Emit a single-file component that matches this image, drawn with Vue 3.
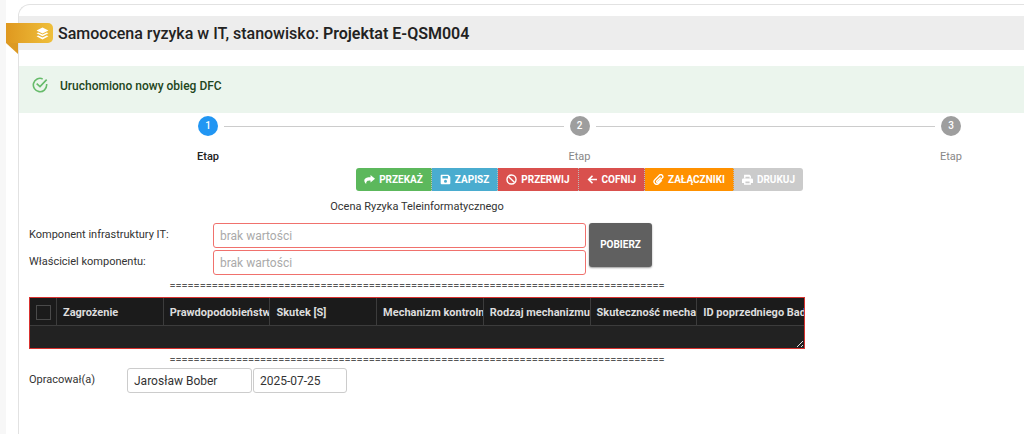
<script setup>
const steps = [
  { number: 1, label: 'Etap', active: true },
  { number: 2, label: 'Etap', active: false },
  { number: 3, label: 'Etap', active: false },
]

const actions = [
  { icon: 'share', label: 'Przekaż', tone: 'green' },
  { icon: 'save', label: 'Zapisz', tone: 'blue' },
  { icon: 'ban', label: 'Przerwij', tone: 'red' },
  { icon: 'back', label: 'Cofnij', tone: 'red' },
  { icon: 'clip', label: 'Załączniki', tone: 'orange' },
  { icon: 'print', label: 'Drukuj', tone: 'muted', disabled: true },
]

const columns = [
  'Zagrożenie',
  'Prawdopodobieństwo',
  'Skutek [S]',
  'Mechanizm kontrolny',
  'Rodzaj mechanizmu',
  'Skuteczność mechanizmu',
  'ID poprzedniego Badania',
]

const divider = '='.repeat(82)
</script>

<template>
  <div class="page">
    <main class="card">
      <div class="ribbon">
        <svg viewBox="0 0 24 24" width="13" height="13" aria-hidden="true">
          <path d="M12 1 23 6.500 12 12 1 6.500Z" />
          <path d="M4 10 12 14 20 10 23 11.700 12 17.300 1 11.700Z" />
          <path d="M4 15.500 12 19.500 20 15.500 23 17.200 12 23 1 17.200Z" />
        </svg>
      </div>
      <h1 class="title">Samoocena ryzyka w IT, stanowisko: <b>Projektat E-QSM004</b></h1>

      <div class="alert" role="status">
        <svg class="alert-icon" viewBox="0 0 24 24" width="16" height="16" aria-hidden="true">
          <path d="M22 10.500V12a10 10 0 1 1-6-9.150" />
          <path d="M22 4 12 14.500 7 10" />
        </svg>
        <span>Uruchomiono nowy obieg DFC</span>
      </div>

      <div class="stepper">
        <template v-for="(step, i) in steps" :key="step.number">
          <span v-if="i" class="step-line"></span>
          <div class="step" :class="{ active: step.active }">
            <span class="step-number">{{ step.number }}</span>
            <span class="step-label">{{ step.label }}</span>
          </div>
        </template>
      </div>

      <form class="form" @submit.prevent>
        <div class="toolbar">
          <button
            v-for="action in actions"
            :key="action.label"
            type="button"
            class="action"
            :class="action.tone"
            :disabled="action.disabled"
          >
            <svg v-if="action.icon === 'share'" viewBox="0 0 16 16" width="11" height="11" aria-hidden="true">
              <path fill="currentColor" d="M9.500 1.500 16 7l-6.500 5.500V9.300C5 9.200 3 10 3.200 14.500.8 12.500 0 10 .7 8 1.700 5.300 5 4.700 9.500 4.700Z" />
            </svg>
            <svg v-else-if="action.icon === 'save'" viewBox="0 0 16 16" width="11" height="11" aria-hidden="true">
              <path fill="currentColor" fill-rule="evenodd" d="M2 1h10l3 3v9.500a1.500 1.500 0 0 1-1.500 1.500h-11A1.500 1.500 0 0 1 1 13.500V2a1 1 0 0 1 1-1Zm1.500 2v3.500h8V3Zm4.500 5.500a2.200 2.200 0 1 0 0 4.400 2.200 2.200 0 0 0 0-4.400Z" />
            </svg>
            <svg v-else-if="action.icon === 'ban'" viewBox="0 0 16 16" width="11" height="11" aria-hidden="true">
              <circle cx="8" cy="8" r="6.600" fill="none" stroke="currentColor" stroke-width="2" />
              <path d="m3.500 3.500 9 9" stroke="currentColor" stroke-width="2" />
            </svg>
            <svg v-else-if="action.icon === 'back'" viewBox="0 0 16 16" width="11" height="11" aria-hidden="true">
              <path d="M14.500 8H3M8 2.500 2.500 8 8 13.500" fill="none" stroke="currentColor" stroke-width="2.400" />
            </svg>
            <svg v-else-if="action.icon === 'clip'" viewBox="0 0 16 16" width="11" height="11" aria-hidden="true">
              <path d="m11 5-5.300 5.300a1 1 0 0 0 1.700 1.700l6-6a2.900 2.900 0 0 0-4.200-4.200L2.700 8.300a3.800 3.800 0 0 0 5.400 5.400l4.700-4.700" fill="none" stroke="currentColor" stroke-width="2" />
            </svg>
            <svg v-else viewBox="0 0 16 16" width="11" height="11" aria-hidden="true">
              <path fill="currentColor" fill-rule="evenodd" d="M3 1h8l2 2v3h-2V4H5v2H3ZM2 6.500h12a2 2 0 0 1 2 2V13h-3v2.500H3V13H0V8.500a2 2 0 0 1 2-2ZM5 11v2.500h6V11Z" />
            </svg>
            <span>{{ action.label }}</span>
          </button>
        </div>

        <h2 class="form-title">Ocena Ryzyka Teleinformatycznego</h2>

        <div class="lookup">
          <div class="lookup-fields">
            <label for="component">Komponent infrastruktury IT:</label>
            <input id="component" class="field required" type="text" placeholder="brak wartości" />
            <label for="owner">Właściciel komponentu:</label>
            <input id="owner" class="field required" type="text" placeholder="brak wartości" />
          </div>
          <button type="button" class="fetch">Pobierz</button>
        </div>

        <div class="divider">{{ divider }}</div>

        <div class="grid">
          <table>
            <thead>
              <tr>
                <th class="select"><input type="checkbox" aria-label="Zaznacz wszystkie" /></th>
                <th v-for="column in columns" :key="column">{{ column }}</th>
              </tr>
            </thead>
          </table>
          <svg class="grip" viewBox="0 0 8 8" width="8" height="8" aria-hidden="true">
            <path d="M1 7 7 1M5 7 7 5" />
          </svg>
        </div>

        <div class="divider">{{ divider }}</div>

        <div class="author">
          <label for="author">Opracował(a)</label>
          <input id="author" class="field name" type="text" value="Jarosław Bober" />
          <input class="field date" type="text" value="2025-07-25" aria-label="Data opracowania" />
        </div>
      </form>
    </main>
  </div>
</template>

<style>
body {
  margin: 0;
  background: #fff;
  overflow: hidden;
}
</style>

<style scoped>
.page {
  box-sizing: border-box;
  min-height: 100vh;
  padding: 4px 0 0 12px;
  border-left: 6px solid #f7f7f7;
  font-family: Roboto, "Liberation Sans", sans-serif;
  font-size: 11px;
  color: #333;
  display: flex;
}
.card {
  position: relative;
  flex: 1;
  min-width: 0;
  box-sizing: border-box;
  padding-top: 11px;
  border: 1px solid #e2e2e2;
  border-right: 0;
  border-bottom: 0;
  border-top-left-radius: 12px;
}
.ribbon {
  position: absolute;
  left: -13px;
  top: 18px;
  width: 47px;
  height: 20px;
  box-sizing: border-box;
  padding-right: 4px;
  border-radius: 0 5px 5px 0;
  background: linear-gradient(90deg, #df981f, #efbf3b);
  display: flex;
  align-items: center;
  justify-content: flex-end;
}
.ribbon::after {
  content: "";
  position: absolute;
  left: 0;
  top: 20px;
  border-top: 11px solid #dc9a24;
  border-left: 12px solid transparent;
}
.ribbon svg {
  fill: #fff;
}
.title {
  margin: 0;
  padding: 2px 0 0 39px;
  background: #ededed;
  color: #222;
  font-size: 16px;
  font-weight: 500;
  line-height: 32px;
  white-space: nowrap;
}
.title b {
  font-weight: 600;
}
.alert {
  margin-top: 16px;
  height: 47px;
  box-sizing: border-box;
  padding: 11px 13px;
  background: #ebf5ed;
  color: #1e4620;
  font-size: 12px;
  font-weight: 500;
  line-height: 18px;
  display: flex;
  gap: 12px;
}
.alert-icon {
  fill: none;
  stroke: #66bb6a;
  stroke-width: 2.400;
}
.stepper {
  display: flex;
  align-items: flex-start;
  padding: 3px 61px 0 177px;
}
.step {
  width: 24px;
  display: flex;
  flex-direction: column;
  align-items: center;
  color: #888;
}
.step-number {
  width: 20px;
  height: 20px;
  border-radius: 50%;
  background: #9e9e9e;
  color: #fff;
  font-size: 10px;
  font-weight: 500;
  line-height: 20px;
  text-align: center;
}
.step-label {
  margin-top: 12px;
  line-height: 18px;
}
.step.active {
  color: #222;
  font-weight: 500;
}
.step.active .step-number {
  background: #2196f3;
}
.step-line {
  flex: 1;
  height: 1px;
  margin: 10px 4px 0;
  background: #ccc;
}
.form {
  max-width: 776px;
  margin: 2px 10px 0;
}
.toolbar {
  display: flex;
  justify-content: flex-end;
  padding-right: 2px;
}
.action {
  height: 23px;
  padding: 0 8px;
  border: 0;
  border-right: 1px dotted #bbb;
  color: #fff;
  font: 700 10px/23px Roboto, "Liberation Sans", sans-serif;
  text-transform: uppercase;
  white-space: nowrap;
  display: flex;
  align-items: center;
  gap: 4px;
}
.action:first-child {
  border-radius: 3px 0 0 3px;
}
.action:last-child {
  border-right: 0;
  border-radius: 0 3px 3px 0;
}
.green { background: #5cb85c; }
.blue { background: #4aaccf; }
.red { background: #d9504d; }
.orange { background: #ff9100; }
.muted { background: #cbcbcb; }
.form-title {
  margin: 7px 0 0;
  font-size: 11px;
  font-weight: 400;
  line-height: 18px;
  text-align: center;
}
.lookup {
  display: flex;
  gap: 3px;
  margin-top: 7px;
}
.lookup-fields {
  display: grid;
  grid-template-columns: 184px 373px;
  row-gap: 2px;
}
.lookup-fields label,
.author label {
  line-height: 24px;
}
.field {
  box-sizing: border-box;
  min-width: 0;
  height: 25px;
  padding: 0 6px;
  border: 1px solid #ccc;
  border-radius: 3px;
  background: #fff;
  color: #333;
  font: 400 12px/20px Roboto, "Liberation Sans", sans-serif;
}
.field.required {
  border-color: #f0716d;
}
.field::placeholder {
  color: #aaa;
  opacity: 1;
}
.fetch {
  width: 63px;
  height: 44px;
  padding: 0;
  border: 0;
  border-radius: 3px;
  background: #606060;
  box-shadow: 0 1px 2px rgba(0, 0, 0, 0.4);
  color: #fff;
  font: 700 10px/20px Roboto, "Liberation Sans", sans-serif;
  text-transform: uppercase;
}
.divider {
  color: #555;
  line-height: 22px;
  text-align: center;
  white-space: nowrap;
}
.grid {
  position: relative;
  height: 52px;
  box-sizing: border-box;
  border: 1px solid #d8322f;
  background: #222;
}
.grid table {
  width: 100%;
  table-layout: fixed;
  border-collapse: separate;
  border-spacing: 0;
}
.grid th {
  box-sizing: border-box;
  height: 28px;
  padding: 1px 0 0 6px;
  overflow: hidden;
  border-right: 1px solid #3c3c3c;
  border-bottom: 1px solid #3c3c3c;
  background: #1b1b1b;
  color: #ddd;
  font-weight: 700;
  text-align: left;
  white-space: nowrap;
}
.grid th:last-child {
  border-right: 0;
}
.grid .select {
  width: 27px;
}
.grid input {
  appearance: none;
  display: block;
  box-sizing: border-box;
  width: 15px;
  height: 15px;
  margin: 0;
  border: 1px solid #4a4a4a;
}
.grip {
  position: absolute;
  right: 0;
  bottom: 0;
  stroke: #ddd;
}
.author {
  display: flex;
  margin-top: -3px;
}
.author label {
  width: 98px;
}
.name {
  width: 125px;
  margin-right: 1px;
}
.date {
  width: 94px;
}
</style>
